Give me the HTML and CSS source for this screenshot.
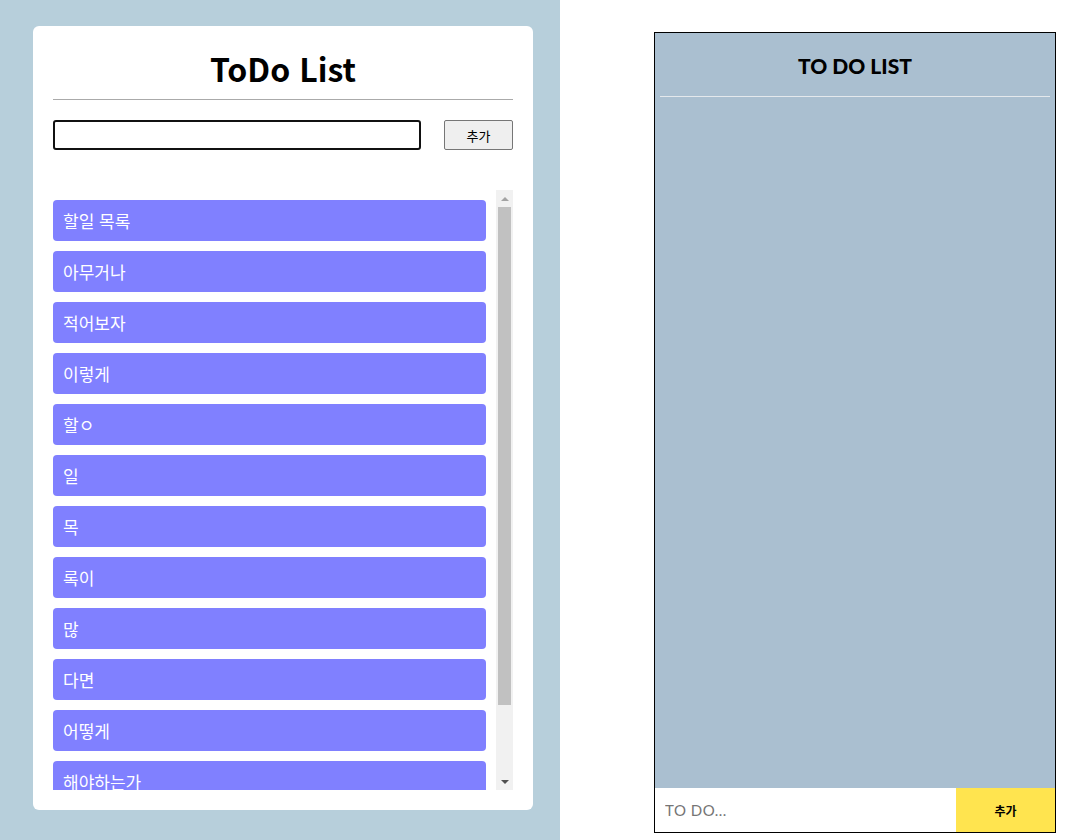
FILE: index.html
```html
<!DOCTYPE html>
<html lang="ko">
<head>
<meta charset="utf-8">
<title>ToDo List</title>
<link rel="stylesheet" href="styles.css">
</head>
<body>
  <section class="left">
    <div class="card">
      <h1 class="title">ToDo List</h1>
      <form class="add-form">
        <input class="add-input" type="text">
        <button class="add-btn" type="button">추가</button>
      </form>
      <div class="list-wrap">
        <ul class="list">
          <li class="item">할일 목록</li>
          <li class="item">아무거나</li>
          <li class="item">적어보자</li>
          <li class="item">이렇게</li>
          <li class="item">할ㅇ</li>
          <li class="item">일</li>
          <li class="item">목</li>
          <li class="item">록이</li>
          <li class="item">많</li>
          <li class="item">다면</li>
          <li class="item">어떻게</li>
          <li class="item">해야하는가</li>
        </ul>
        <div class="scrollbar">
          <div class="sb-btn"><span class="arrow-up"></span></div>
          <div class="sb-track"><div class="sb-thumb"></div></div>
          <div class="sb-btn"><span class="arrow-down"></span></div>
        </div>
      </div>
    </div>
  </section>
  <section class="right">
    <div class="app">
      <h2 class="app-title">TO DO LIST</h2>
      <div class="app-body"></div>
      <form class="app-form">
        <input class="app-input" type="text" placeholder="TO DO...">
        <button class="app-btn" type="button">추가</button>
      </form>
    </div>
  </section>
</body>
</html>
```
FILE: styles.css
```css
* { box-sizing: border-box; }
html, body { margin: 0; padding: 0; }
body {
  display: flex;
  align-items: flex-start;
  width: 1070px;
  height: 840px;
  background: #ffffff;
  font-family: "Noto Sans CJK KR", "Noto Sans", sans-serif;
  overflow: hidden;
}
.left {
  width: 560px;
  height: 840px;
  background: #b7cfdb;
  padding: 26px 27px 30px 33px;
}
.card {
  width: 500px;
  height: 784px;
  background: #fff;
  border-radius: 6px;
  padding: 0 20px 20px;
  display: flex;
  flex-direction: column;
}
.title {
  margin: 0;
  padding: 21px 0 10px;
  height: 74px;
  line-height: 42px;
  font-size: 32px;
  font-weight: 700;
  text-align: center;
  color: #000;
  border-bottom: 1px solid #aaaaaa;
}
.add-form {
  display: flex;
  margin: 20px 0 0;
  height: 30px;
}
.add-input {
  width: 368px;
  height: 30px;
  border: 2px solid #111;
  border-radius: 3px;
  padding: 0 4px;
  outline: none;
}
.add-btn {
  margin-left: auto;
  width: 69px;
  height: 30px;
  background: #efefef;
  border: 1px solid #767676;
  border-radius: 2px;
  font-family: "Noto Sans CJK KR", sans-serif;
  font-size: 13px;
  color: #000;
  padding: 0;
}
.list-wrap {
  margin-top: 40px;
  height: 600px;
  display: flex;
}
.list {
  list-style: none;
  margin: 0;
  padding: 10px 0 0;
  width: 443px;
  height: 600px;
  overflow: hidden;
  display: flex;
  flex-direction: column;
  gap: 10px;
}
.item {
  flex: none;
  width: 433px;
  height: 41px;
  line-height: 41px;
  padding-left: 10px;
  background: #8080ff;
  border-radius: 4px;
  color: #fff;
  font-size: 17px;
}
.scrollbar {
  width: 17px;
  height: 600px;
  background: #f1f1f1;
  display: flex;
  flex-direction: column;
}
.sb-btn {
  height: 17px;
  display: flex;
  align-items: center;
  justify-content: center;
}
.arrow-up {
  width: 0; height: 0;
  border-left: 4px solid transparent;
  border-right: 4px solid transparent;
  border-bottom: 4px solid #a3a3a3;
}
.arrow-down {
  width: 0; height: 0;
  border-left: 4px solid transparent;
  border-right: 4px solid transparent;
  border-top: 4px solid #505050;
}
.sb-track {
  flex: 1;
  padding: 0 2px;
}
.sb-thumb {
  height: 498px;
  background: #c1c1c1;
}
.right {
  margin-left: 94px;
  margin-top: 32px;
}
.app {
  width: 402px;
  height: 801px;
  border: 1px solid #000;
  background: #aabfd0;
  display: flex;
  flex-direction: column;
}
.app-title {
  margin: 0 5px;
  padding: 21px 0 18px;
  line-height: 24px;
  height: 64px;
  font-family: "Lato", sans-serif;
  font-weight: 900;
  font-size: 21px;
  text-align: center;
  color: #000;
  border-bottom: 1px solid #e4e8ec;
}
.app-body { flex: 1; }
.app-form {
  display: flex;
  height: 44px;
}
.app-input {
  flex: 1;
  border: none;
  background: #fff;
  padding: 0 10px;
  font-family: "Lato", sans-serif;
  font-size: 15px;
  outline: none;
}
.app-input::placeholder { color: #757575; letter-spacing: 0.5px; }
.app-btn {
  width: 99px;
  border: none;
  background: #ffe44f;
  font-family: "Noto Sans CJK KR", sans-serif;
  font-weight: 700;
  font-size: 12px;
  color: #000;
  padding: 0;
}
```
